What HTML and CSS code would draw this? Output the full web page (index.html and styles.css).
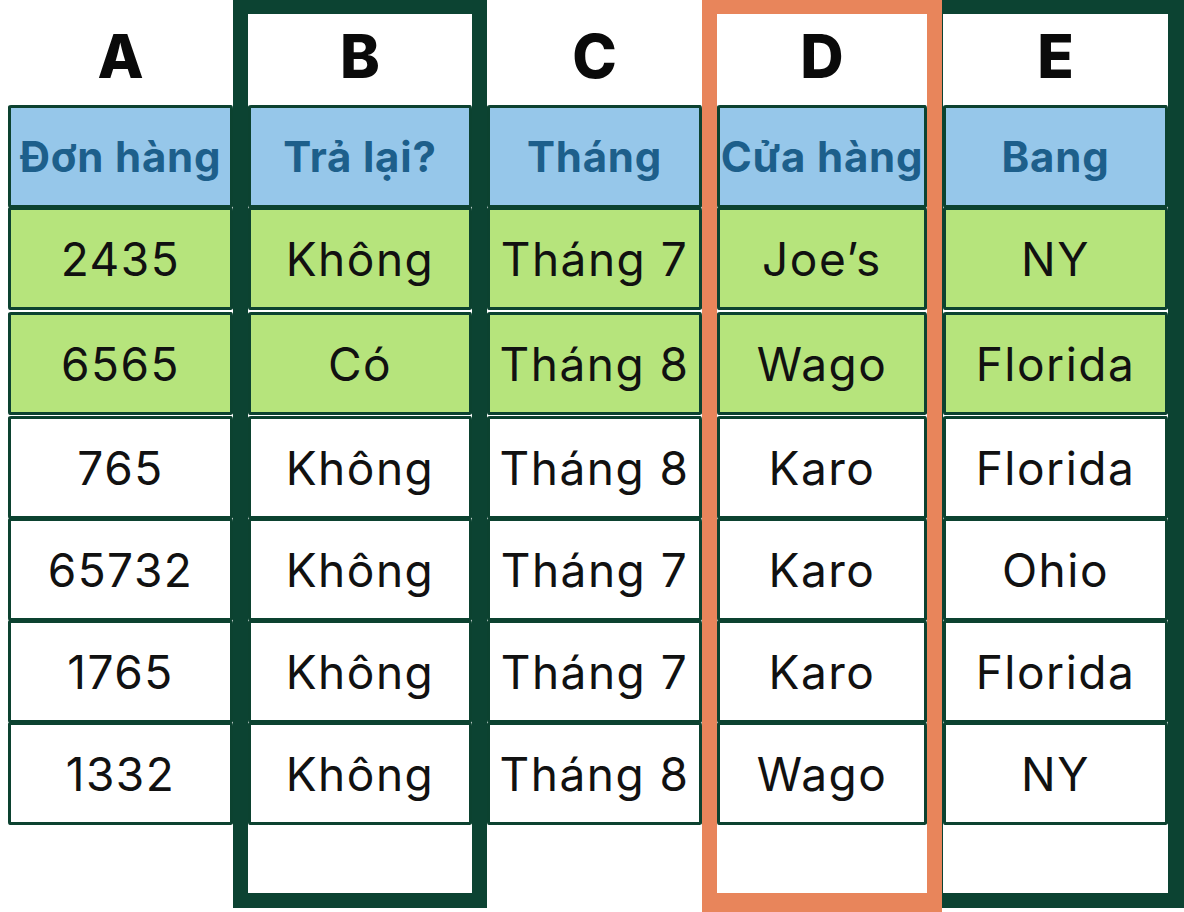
FILE: index.html
```html
<!DOCTYPE html>
<html lang="vi">
<head>
<meta charset="utf-8">
<title>Bảng đơn hàng</title>
<link rel="stylesheet" href="styles.css">
</head>
<body>
<div class="sheet">
  <div class="col col-a">
    <div class="letter">A</div>
    <div class="cell head">Đơn hàng</div>
    <div class="cell green">2435</div>
    <div class="cell green">6565</div>
    <div class="cell">765</div>
    <div class="cell">65732</div>
    <div class="cell">1765</div>
    <div class="cell">1332</div>
  </div>
  <div class="col col-b frame-dark">
    <div class="letter">B</div>
    <div class="cell head">Trả lại?</div>
    <div class="cell green">Không</div>
    <div class="cell green">Có</div>
    <div class="cell">Không</div>
    <div class="cell">Không</div>
    <div class="cell">Không</div>
    <div class="cell">Không</div>
  </div>
  <div class="col col-c">
    <div class="letter">C</div>
    <div class="cell head">Tháng</div>
    <div class="cell green">Tháng 7</div>
    <div class="cell green">Tháng 8</div>
    <div class="cell">Tháng 8</div>
    <div class="cell">Tháng 7</div>
    <div class="cell">Tháng 7</div>
    <div class="cell">Tháng 8</div>
  </div>
  <div class="col col-d frame-orange">
    <div class="letter">D</div>
    <div class="cell head">Cửa hàng</div>
    <div class="cell green">Joe’s</div>
    <div class="cell green">Wago</div>
    <div class="cell">Karo</div>
    <div class="cell">Karo</div>
    <div class="cell">Karo</div>
    <div class="cell">Wago</div>
  </div>
  <div class="col col-e frame-dark-e">
    <div class="letter">E</div>
    <div class="cell head">Bang</div>
    <div class="cell green">NY</div>
    <div class="cell green">Florida</div>
    <div class="cell">Florida</div>
    <div class="cell">Ohio</div>
    <div class="cell">Florida</div>
    <div class="cell">NY</div>
  </div>
</div>
</body>
</html>
```

FILE: styles.css
```css
html, body {
  margin: 0;
  padding: 0;
  background: #ffffff;
}

body {
  width: 1184px;
  height: 912px;
  overflow: hidden;
  font-family: Inter, "Noto Sans", sans-serif;
  color: #111111;
}

.sheet {
  display: flex;
  align-items: flex-start;
  height: 912px;
}

.col {
  display: flex;
  flex-direction: column;
  box-sizing: border-box;
  background: #ffffff;
}

.col-a {
  width: 233px;
  padding: 14px 0 0 8px;
}

.col-b {
  width: 254px;
  height: 908px;
}

.col-c {
  width: 215px;
  padding-top: 14px;
}

.col-d {
  width: 240px;
  height: 912px;
}

.col-e {
  width: 242px;
  height: 908px;
}

.frame-dark {
  border: 15px solid #0c4332;
  border-top-width: 14px;
}

.frame-orange {
  border: 15px solid #e8855b;
  border-top-width: 14px;
  border-bottom-width: 19px;
}

.frame-dark-e {
  border: 16px solid #0c4332;
  border-left-width: 1px;
  border-top-width: 14px;
  border-bottom-width: 15px;
}

.letter {
  height: 91px;
  display: flex;
  align-items: center;
  justify-content: center;
  font-size: 60px;
  font-weight: 800;
  color: #0a0a0a;
  padding-bottom: 8px;
  box-sizing: border-box;
}

.cell {
  height: 103px;
  box-sizing: border-box;
  border: 3px solid #0c4230;
  border-radius: 3px 2px 4px 2px / 2px 4px 2px 3px;
  display: flex;
  align-items: center;
  justify-content: center;
  font-size: 46px;
  font-weight: 400;
  letter-spacing: 1.5px;
  white-space: nowrap;
  background: #ffffff;
  margin-top: -1px;
}

.cell:nth-child(2) {
  margin-top: 0;
}

.head {
  background: #96c7ea;
  color: #1d5f8b;
  font-size: 42px;
  font-weight: 700;
  letter-spacing: 0.8px;
}

.green {
  background: #b6e47c;
}

.green + .green {
  margin-top: 2px;
  box-shadow: 0 -2px 0 0 #ffffff;
}

.green + .cell:not(.green) {
  margin-top: 1px;
}
```
